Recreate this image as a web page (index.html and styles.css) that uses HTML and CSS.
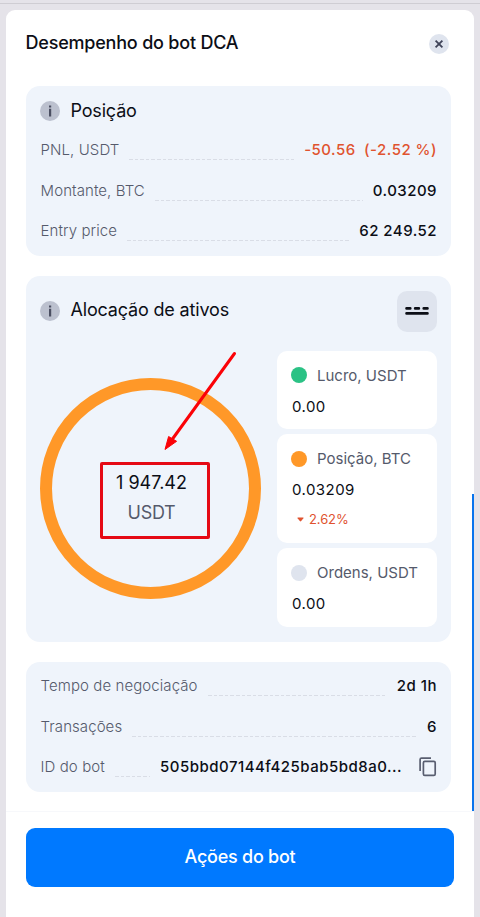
FILE: index.html
```html
<!DOCTYPE html>
<html lang="pt">
<head>
  <meta charset="UTF-8">
  <title>Desempenho do bot DCA</title>
  <link rel="stylesheet" href="styles.css">
</head>
<body>
  <div class="topline"></div>
  <div class="panel">
    <div class="panel-header">
      <h1>Desempenho do bot DCA</h1>
      <button class="close" aria-label="Fechar">
        <svg width="20" height="20" viewBox="0 0 20 20"><path d="M6.6 6.6l6.8 6.8M13.4 6.6l-6.8 6.8" stroke="#3f4358" stroke-width="1.8" fill="none"/></svg>
      </button>
    </div>

    <div class="content">
      <section class="card position">
        <div class="card-title">
          <svg class="info" width="20" height="20" viewBox="0 0 20 20"><circle cx="10" cy="10" r="10" fill="#bcc1cf"/><path d="M9 4.4h2.2v2.2H9zM9 7.8h2.2v7.6H9z" fill="#4b4f62"/></svg>
          <h2>Posição</h2>
        </div>
        <div class="row"><span class="label">PNL, USDT</span><span class="dots"></span><span class="value loss">-50.56 <span class="percent">(-2.52 %)</span></span></div>
        <div class="row"><span class="label">Montante, BTC</span><span class="dots"></span><span class="value">0.03209</span></div>
        <div class="row"><span class="label">Entry price</span><span class="dots"></span><span class="value">62 249.52</span></div>
      </section>

      <section class="card allocation">
        <div class="card-title">
          <svg class="info" width="20" height="20" viewBox="0 0 20 20"><circle cx="10" cy="10" r="10" fill="#bcc1cf"/><path d="M9 4.4h2.2v2.2H9zM9 7.8h2.2v7.6H9z" fill="#4b4f62"/></svg>
          <h2>Alocação de ativos</h2>
          <button class="view" aria-label="Visualizar">
            <svg width="26" height="10" viewBox="0 0 26 10"><path d="M2.6 2.4h3.6M11.2 2.4h3.6M19.8 2.4h3.6M2.6 7.4h20.8" stroke="#0c0e16" stroke-width="2.8" stroke-linecap="round"/></svg>
          </button>
        </div>
        <div class="allocation-body">
          <div class="ring">
            <div class="total">
              <span class="amount">1 947.42</span>
              <span class="currency">USDT</span>
            </div>
            <svg class="arrow" width="76" height="104" viewBox="0 0 76 104"><path d="M71.5 3.5L8 91" stroke="#fb0207" stroke-width="3" stroke-linecap="round"/><path d="M2 99.5L5.6 86.5l8 4.8z" fill="#fb0207" stroke="#fb0207" stroke-width="1"/></svg>
          </div>
          <div class="legend">
            <div class="item">
              <div class="name"><span class="dot green"></span>Lucro, USDT</div>
              <div class="number">0.00</div>
            </div>
            <div class="item btc">
              <div class="name"><span class="dot orange"></span>Posição, BTC</div>
              <div class="number">0.03209</div>
              <div class="change"><svg width="7" height="5" viewBox="0 0 7 5"><path d="M1 .5h5q1 0 .4.8L4.2 4.1q-.7.8-1.4 0L.6 1.3Q0 .5 1 .5z" fill="#e0532f"/></svg>2.62%</div>
            </div>
            <div class="item">
              <div class="name"><span class="dot gray"></span>Ordens, USDT</div>
              <div class="number">0.00</div>
            </div>
          </div>
        </div>
      </section>

      <section class="card details">
        <div class="row"><span class="label">Tempo de negociação</span><span class="dots"></span><span class="value">2d 1h</span></div>
        <div class="row"><span class="label">Transações</span><span class="dots"></span><span class="value">6</span></div>
        <div class="row"><span class="label">ID do bot</span><span class="dots"></span><span class="value bot-id">505bbd07144f425bab5bd8a0...</span>
          <svg class="copy" width="18" height="20" viewBox="0 0 18 20"><path d="M1.1 14V2.6q0-1.5 1.5-1.5H12" fill="none" stroke="#595e70" stroke-width="1.7"/><rect x="4.4" y="4.4" width="11.8" height="14" rx="1.4" fill="none" stroke="#595e70" stroke-width="1.7"/></svg>
        </div>
      </section>
    </div>

    <div class="footer">
      <button class="actions">Ações do bot</button>
    </div>
    <div class="scrollbar"></div>
  </div>
</body>
</html>
```

FILE: styles.css
```css
* {
  box-sizing: border-box;
}

body {
  margin: 0;
  height: 917px;
  overflow: hidden;
  display: flex;
  flex-direction: column;
  font-family: Inter, "Liberation Sans", sans-serif;
  background-color: #e5e3e9;
  color: #0c0e16;
}

h1, h2 {
  margin: 0;
}

button {
  border: none;
  padding: 0;
  font-family: inherit;
  cursor: pointer;
}

.topline {
  height: 10px;
  padding-top: 3px;
}

.topline::before {
  content: "";
  display: block;
  height: 1px;
  background-color: #cfcdd3;
}

.panel {
  position: relative;
  flex: 1;
  width: 468px;
  margin-left: 6px;
  background-color: #fff;
  border-radius: 9px 9px 0 0;
}

.panel-header {
  height: 76px;
  padding: 0 25px 8px 19.5px;
  display: flex;
  align-items: center;
  justify-content: space-between;
}

h1 {
  padding-bottom: 3px;
  font-size: 18px;
  font-weight: 500;
  letter-spacing: -0.2px;
}

.close {
  width: 20px;
  height: 20px;
  border-radius: 50%;
  background-color: #dfe4ee;
}

.close svg {
  display: block;
}

.content {
  height: 725px;
  padding: 0 22.6px 0 19.6px;
  display: flex;
  flex-direction: column;
  gap: 20px;
}

.card {
  padding: 0 14.4px;
  background-color: #eff4fb;
  border-radius: 14px;
}

.position {
  height: 170px;
  padding-top: 5px;
}

.allocation {
  height: 366px;
  padding-top: 14.5px;
}

.details {
  height: 130px;
  padding-top: 4px;
}

.card-title {
  height: 39px;
  display: flex;
  align-items: center;
}

.info {
  margin-right: 10.5px;
}

h2 {
  font-size: 18px;
  font-weight: 400;
  letter-spacing: -0.17px;
}

.allocation h2 {
  padding-bottom: 3px;
}

.row {
  height: 40.5px;
  padding-bottom: 1px;
  display: flex;
  align-items: center;
  font-size: 15px;
}

.label {
  padding-left: 0.6px;
  color: #555a6b;
  font-weight: 300;
  letter-spacing: 0.08px;
}

.dots {
  flex: 1;
  height: 1px;
  margin: 20px 10px 0;
  background: repeating-linear-gradient(90deg, #d9dde6 0 3.6px, transparent 3.6px 5.6px);
}

.value {
  font-weight: 500;
  letter-spacing: 0.48px;
}

.loss {
  color: #e0532f;
}

.percent {
  margin-left: 4px;
}

.copy {
  margin-left: 17px;
}

.view {
  width: 40px;
  height: 41px;
  margin-left: auto;
  display: flex;
  align-items: center;
  justify-content: center;
  background-color: #dfe4ee;
  border-radius: 10px;
}

.allocation .card-title {
  height: 41px;
}

.allocation-body {
  padding-top: 19px;
  display: flex;
  align-items: center;
  justify-content: space-between;
}

.ring {
  position: relative;
  width: 221px;
  height: 221px;
  display: flex;
  align-items: center;
  justify-content: center;
  border: 12px solid #ff9828;
  border-radius: 50%;
}

.total {
  width: 110px;
  height: 77px;
  margin: 24px 0 0 9px;
  padding: 3px 7px 0 0;
  display: flex;
  flex-direction: column;
  align-items: center;
  font-size: 18px;
  line-height: 30px;
  border: 3px solid #e50914;
  border-radius: 2px;
}

.currency {
  color: #555a6b;
  letter-spacing: -0.3px;
}

/* pointer over the ring */
.arrow {
  position: absolute;
  left: 111px;
  top: -40px;
}

.legend {
  width: 160px;
  display: flex;
  flex-direction: column;
  gap: 5px;
}

.item {
  height: 78.5px;
  padding: 9px 14px 0;
  background-color: #fff;
  border-radius: 10px;
  font-size: 15px;
}

.btc {
  height: 109px;
}

.name {
  height: 31px;
  display: flex;
  align-items: center;
  color: #555a6b;
  white-space: nowrap;
}

.dot {
  width: 16px;
  height: 16px;
  margin-right: 10px;
  border-radius: 50%;
}

.green {
  background-color: #2bc285;
}

.orange {
  background-color: #ff9828;
}

.gray {
  background-color: #dfe4ee;
}

.number {
  padding-left: 1px;
  line-height: 31px;
  letter-spacing: 0.45px;
}

.change {
  height: 28px;
  padding-left: 6px;
  display: flex;
  align-items: center;
  gap: 5px;
  color: #e0532f;
  font-size: 13px;
  letter-spacing: -0.1px;
}

.footer {
  padding: 16px 20px 0;
  border-top: 1px solid #f7f8fb;
}

.actions {
  width: 428px;
  height: 59px;
  padding-bottom: 2px;
  background-color: #0079ff;
  border-radius: 9px;
  color: #fff;
  font-size: 18px;
  font-weight: 500;
  letter-spacing: -0.25px;
}

.scrollbar {
  position: absolute;
  right: 0;
  top: 484px;
  width: 2px;
  height: 317px;
  background-color: #0874ed;
}
```
